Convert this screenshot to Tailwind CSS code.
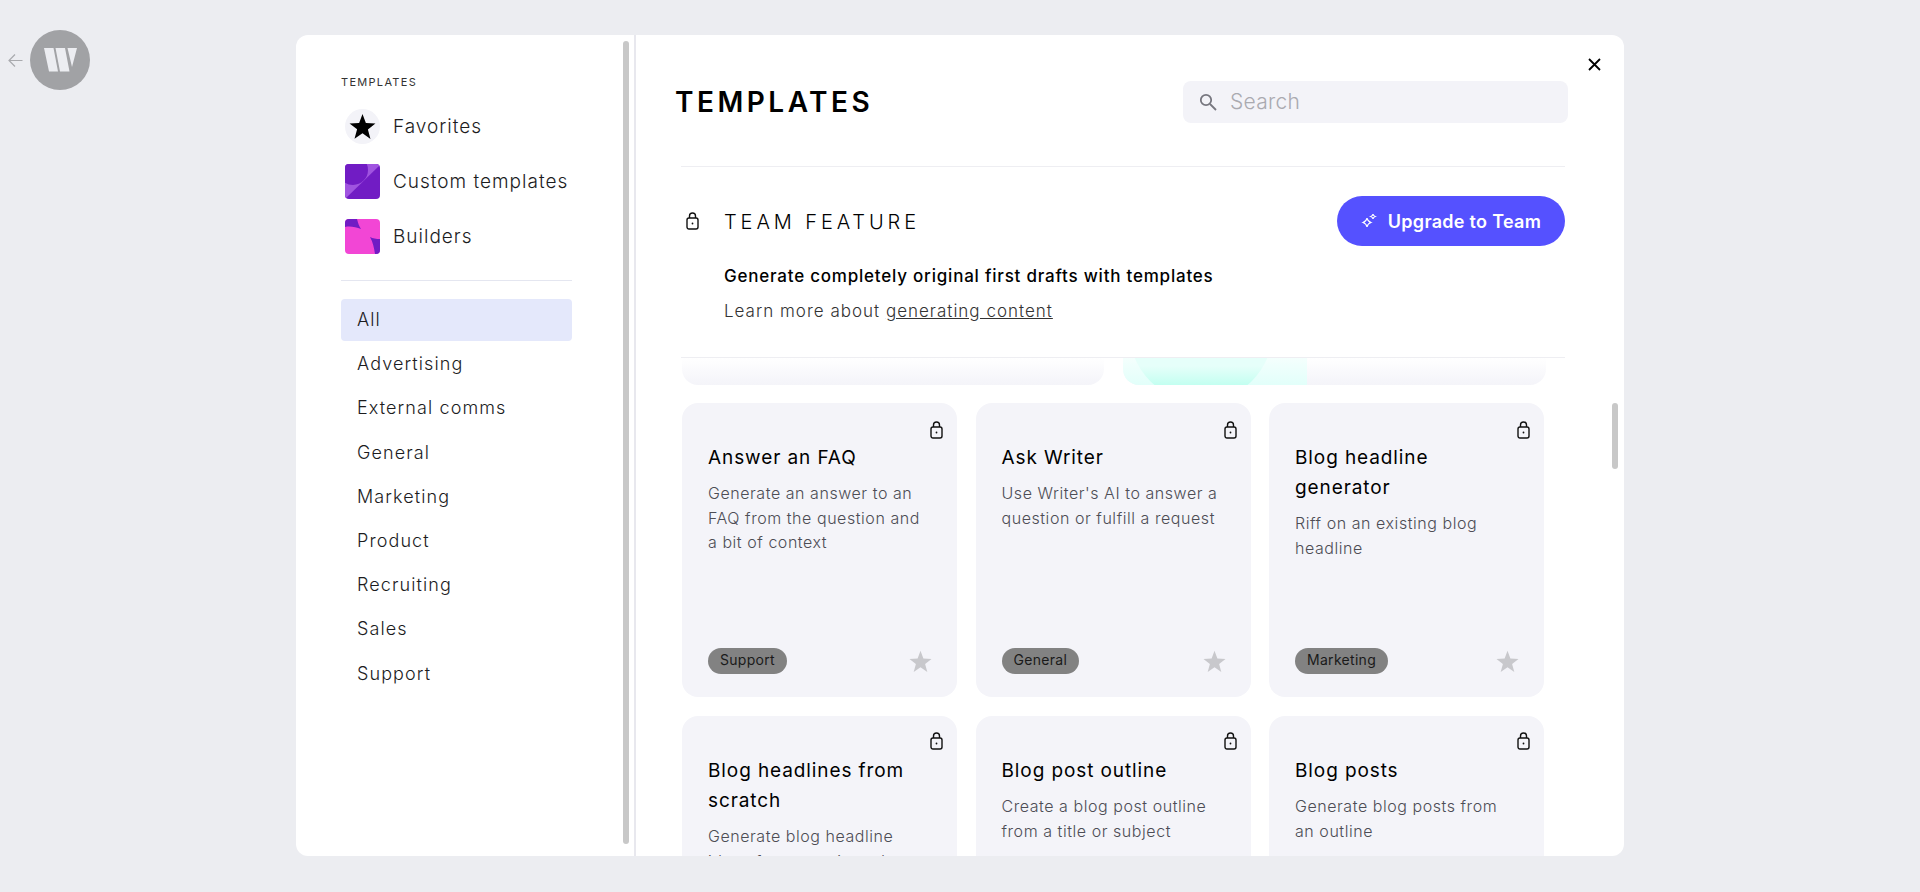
<!doctype html>
<html>
<head>
    <meta charset="UTF-8">
    <script src="https://cdn.jsdelivr.net/npm/@tailwindcss/browser@4"></script>
</head>
<body class="h-screen overflow-hidden bg-[#ecedf1] font-['Inter','Noto_Sans',sans-serif] text-black">

<!-- back arrow + logo -->
<a class="absolute left-[8px] top-[30px] flex items-center gap-[7px]">
    <svg class="w-[15px] h-[15px]" viewBox="0 0 15 15" fill="none" stroke="#a9aaae" stroke-width="1.2"><path d="M14.5 7.5H1M7 1.5L1 7.5l6 6"/></svg>
    <span class="w-[60px] h-[60px] rounded-full bg-[#a1a2a5] flex items-center justify-center">
        <svg class="w-[33px] h-[24px]" viewBox="0 0 33 24" fill="#ecedf1"><path d="M0 0h9.500l4.500 23.500H5zM11.500 0h9.500l4.500 23.500H16zM23.500 0H33l-5 19z"/></svg>
    </span>
</a>

<div class="ml-[296px] mt-[35px] w-[1328px] h-[821px] bg-white rounded-xl overflow-hidden flex relative">

    <!-- sidebar -->
    <aside class="w-[340px] h-full shrink-0 pl-[45px] pt-[40px] relative border-r-2 border-[#e8e8ee]">
        <p class="text-[11px] leading-[14px] tracking-[1.3px] text-[#333]">TEMPLATES</p>
        <ul class="mt-[20px] pl-[4px] flex flex-col gap-[20px] text-[#1c1c1e] text-[19px] leading-[35px] tracking-[1px] font-light">
            <li class="flex items-center gap-[13px]">
                <span class="w-[35px] h-[35px] rounded-full bg-[#f3f3f8] flex items-center justify-center">
                    <svg class="w-[27px] h-[27px]" viewBox="0 0 24 24" fill="#000"><path d="M12 .8l3 8.100 8.500.4-6.700 5.300 2.300 8.400L12 18l-7.100 4.900 2.300-8.400L.5 9.300 9 8.900z"/></svg>
                </span>
                Favorites
            </li>
            <li class="flex items-center gap-[13px]">
                <svg class="w-[35px] h-[35px] rounded-[4px]" viewBox="0 0 35 35"><rect width="35" height="35" fill="#711cc4"/><path d="M0 35L35 1V0H0z" fill="#a054e0"/><circle cx="8" cy="6" r="15" fill="#711cc4"/></svg>
                Custom templates
            </li>
            <li class="flex items-center gap-[13px]">
                <svg class="w-[35px] h-[35px] rounded-[4px]" viewBox="0 0 35 35"><rect width="35" height="35" fill="#f246d5"/><path d="M0 0h12c1 4 2 7 4 10C11 8 5 7 0 8z" fill="#711cc4"/><path d="M35 20c-4 0-7-.5-10-2 3 5 4 11 5 17h5z" fill="#711cc4"/></svg>
                Builders
            </li>
        </ul>
        <div class="mt-[26px] w-[231px] h-px bg-[#e4e6f0]"></div>
        <nav class="mt-[18px] w-[231px] flex flex-col gap-[2.200px] text-[#1c1c1e] text-[18px] leading-[42px] tracking-[1.100px] font-light">
            <a class="pl-[16px] bg-[#e4e8fb] rounded-[4px]">All</a>
            <a class="pl-[16px]">Advertising</a>
            <a class="pl-[16px]">External comms</a>
            <a class="pl-[16px]">General</a>
            <a class="pl-[16px]">Marketing</a>
            <a class="pl-[16px]">Product</a>
            <a class="pl-[16px]">Recruiting</a>
            <a class="pl-[16px]">Sales</a>
            <a class="pl-[16px]">Support</a>
        </nav>
        <!-- scrollbar thumb -->
        <div class="absolute right-[5px] top-[6px] bottom-[12px] w-[6px] rounded-full bg-[#c8c8c8]"></div>
    </aside>

    <!-- main column -->
    <main class="flex-1 min-w-0 pl-[39px] overflow-hidden">
        <header class="flex items-center justify-between pt-[46px] pr-[56px]">
            <h1 class="text-[28px] leading-[42px] font-semibold tracking-[3.500px]">TEMPLATES</h1>
            <label class="w-[385px] h-[42px] bg-[#f3f3f8] rounded-lg flex items-center pl-[15px] gap-[12px]">
                <svg class="w-[20px] h-[20px]" viewBox="0 0 20 20" fill="none" stroke="#77777f" stroke-width="1.800"><circle cx="8" cy="8" r="5.200"/><path d="M12 12l6 6"/></svg>
                <span class="text-[21px] leading-[30px] tracking-[0.3px] text-[#aaaab0] font-light">Search</span>
            </label>
        </header>

        <section class="mt-[43px] ml-[6px] mr-[59px] border-y border-[#eeeef2] h-[192px] relative">
            <div class="flex items-center justify-between mt-[29px]">
                <div class="flex items-center">
                    <svg class="ml-[5px] w-[13px] h-[18px]" viewBox="0 0 13 18" fill="none" stroke="#111" stroke-width="1.400"><rect x="1" y="6" width="11" height="11" rx="2"/><path d="M3.500 6V4a3 3 0 0 1 6 0v2"/><circle cx="6.500" cy="11.500" r=".9" fill="#111" stroke="none"/></svg>
                    <span class="ml-[25px] mt-[1px] text-[20px] font-light tracking-[3.900px]">TEAM FEATURE</span>
                </div>
                <button class="h-[50px] w-[228px] rounded-full bg-[#5551ff] text-white text-[18px] tracking-[0.3px] font-semibold flex items-center justify-center gap-[11px]">
                    <svg class="w-[16px] h-[16px]" viewBox="0 0 16 16" fill="none" stroke="#fff" stroke-width="1.200"><path d="M6 5c.4 2.500 1.300 3.500 4 4.500-2.700 1-3.600 2-4 4.500-.4-2.500-1.300-3.500-4-4.500 2.700-1 3.600-2 4-4.500z"/><path d="M12 1c.2 1.400.7 2 2.200 2.500C12.700 4 12.200 4.600 12 6c-.2-1.400-.7-2-2.200-2.500C11.300 3 11.800 2.400 12 1z"/></svg>
                    Upgrade to Team
                </button>
            </div>
            <p class="ml-[43px] mt-[18px] text-[17px] leading-[24px] tracking-[0.78px] font-medium">Generate completely original first drafts with templates</p>
            <p class="ml-[43px] mt-[11px] text-[17px] leading-[24px] tracking-[1px] font-light text-[#333]">Learn more about <a class="underline">generating content</a></p>
        </section>

        <!-- previous row, scrolled almost out of view -->
        <div class="ml-[7px] mr-[80px] grid grid-cols-[422px_423px] gap-[19px]">
            <div class="h-[27px] rounded-b-2xl bg-gradient-to-b from-white to-[#f4f4f9]"></div>
            <div class="h-[27px] rounded-b-2xl bg-gradient-to-b from-white to-[#f4f4f9] overflow-hidden relative">
                <div class="absolute left-0 top-0 w-[184px] h-full bg-gradient-to-b from-[#f4fffd] to-[#e2fffa]"></div>
                <div class="absolute left-[6px] top-[-100px] w-[144px] h-[144px] rounded-full bg-gradient-to-b from-[#e6fffa] from-75% to-[#b8ffee] to-92%"></div>
            </div>
        </div>

        <!-- template cards -->
        <div class="ml-[7px] mt-[18px] grid grid-cols-[275px_275px_275px] gap-x-[18.500px] gap-y-[19px]">
            <article class="h-[294px] rounded-2xl bg-[#f4f4f9] pl-[26px] pr-[30px] pt-[40px] relative flex flex-col">
                <svg class="absolute right-[14px] top-[18px] w-[13px] h-[18px]" viewBox="0 0 13 18" fill="none" stroke="#111" stroke-width="1.400"><rect x="1" y="6" width="11" height="11" rx="2"/><path d="M3.500 6V4a3 3 0 0 1 6 0v2"/><circle cx="6.500" cy="11.500" r=".9" fill="#111" stroke="none"/></svg>
                <h3 class="text-[19px] leading-[30px] tracking-[0.9px] font-normal">Answer an FAQ</h3>
                <p class="mt-[8px] text-[16px] leading-[24.500px] tracking-[0.55px] font-light text-[#4d4d55]">Generate an answer to an FAQ from the question and a bit of context</p>
                <div class="mt-auto mb-[23px] -mr-[10px] flex items-center justify-between pr-[5px]">
                    <span class="h-[26px] px-[12px] rounded-full bg-[#828282] text-[14px] tracking-[0.3px] leading-[24px] text-[#1a1a1a]">Support</span>
                    <svg class="w-[23px] h-[23px]" viewBox="0 0 24 24" fill="#c8c8cc"><path d="M12 .8l3 8.100 8.500.4-6.700 5.300 2.300 8.400L12 18l-7.100 4.900 2.300-8.400L.5 9.300 9 8.900z"/></svg>
                </div>
            </article>
            <article class="h-[294px] rounded-2xl bg-[#f4f4f9] pl-[26px] pr-[30px] pt-[40px] relative flex flex-col">
                <svg class="absolute right-[14px] top-[18px] w-[13px] h-[18px]" viewBox="0 0 13 18" fill="none" stroke="#111" stroke-width="1.400"><rect x="1" y="6" width="11" height="11" rx="2"/><path d="M3.500 6V4a3 3 0 0 1 6 0v2"/><circle cx="6.500" cy="11.500" r=".9" fill="#111" stroke="none"/></svg>
                <h3 class="text-[19px] leading-[30px] tracking-[0.9px] font-normal">Ask Writer</h3>
                <p class="mt-[8px] text-[16px] leading-[24.500px] tracking-[0.55px] font-light text-[#4d4d55]">Use Writer's AI to answer a question or fulfill a request</p>
                <div class="mt-auto mb-[23px] -mr-[10px] flex items-center justify-between pr-[5px]">
                    <span class="h-[26px] px-[12px] rounded-full bg-[#828282] text-[14px] tracking-[0.3px] leading-[24px] text-[#1a1a1a]">General</span>
                    <svg class="w-[23px] h-[23px]" viewBox="0 0 24 24" fill="#c8c8cc"><path d="M12 .8l3 8.100 8.500.4-6.700 5.300 2.300 8.400L12 18l-7.100 4.900 2.300-8.400L.5 9.300 9 8.900z"/></svg>
                </div>
            </article>
            <article class="h-[294px] rounded-2xl bg-[#f4f4f9] pl-[26px] pr-[30px] pt-[40px] relative flex flex-col">
                <svg class="absolute right-[14px] top-[18px] w-[13px] h-[18px]" viewBox="0 0 13 18" fill="none" stroke="#111" stroke-width="1.400"><rect x="1" y="6" width="11" height="11" rx="2"/><path d="M3.500 6V4a3 3 0 0 1 6 0v2"/><circle cx="6.500" cy="11.500" r=".9" fill="#111" stroke="none"/></svg>
                <h3 class="text-[19px] leading-[30px] tracking-[0.9px] font-normal">Blog headline generator</h3>
                <p class="mt-[8px] text-[16px] leading-[24.500px] tracking-[0.55px] font-light text-[#4d4d55]">Riff on an existing blog headline</p>
                <div class="mt-auto mb-[23px] -mr-[10px] flex items-center justify-between pr-[5px]">
                    <span class="h-[26px] px-[12px] rounded-full bg-[#828282] text-[14px] tracking-[0.3px] leading-[24px] text-[#1a1a1a]">Marketing</span>
                    <svg class="w-[23px] h-[23px]" viewBox="0 0 24 24" fill="#c8c8cc"><path d="M12 .8l3 8.100 8.500.4-6.700 5.300 2.300 8.400L12 18l-7.100 4.900 2.300-8.400L.5 9.300 9 8.900z"/></svg>
                </div>
            </article>
            <article class="h-[294px] rounded-2xl bg-[#f4f4f9] pl-[26px] pr-[30px] pt-[40px] relative flex flex-col">
                <svg class="absolute right-[14px] top-[16px] w-[13px] h-[18px]" viewBox="0 0 13 18" fill="none" stroke="#111" stroke-width="1.400"><rect x="1" y="6" width="11" height="11" rx="2"/><path d="M3.500 6V4a3 3 0 0 1 6 0v2"/><circle cx="6.500" cy="11.500" r=".9" fill="#111" stroke="none"/></svg>
                <h3 class="text-[19px] leading-[30px] tracking-[0.9px] font-normal">Blog headlines from scratch</h3>
                <p class="mt-[8px] text-[16px] leading-[24.500px] tracking-[0.55px] font-light text-[#4d4d55]">Generate blog headline ideas from a topic and audience</p>
            </article>
            <article class="h-[294px] rounded-2xl bg-[#f4f4f9] pl-[26px] pr-[30px] pt-[40px] relative flex flex-col">
                <svg class="absolute right-[14px] top-[16px] w-[13px] h-[18px]" viewBox="0 0 13 18" fill="none" stroke="#111" stroke-width="1.400"><rect x="1" y="6" width="11" height="11" rx="2"/><path d="M3.500 6V4a3 3 0 0 1 6 0v2"/><circle cx="6.500" cy="11.500" r=".9" fill="#111" stroke="none"/></svg>
                <h3 class="text-[19px] leading-[30px] tracking-[0.9px] font-normal">Blog post outline</h3>
                <p class="mt-[8px] text-[16px] leading-[24.500px] tracking-[0.55px] font-light text-[#4d4d55]">Create a blog post outline from a title or subject</p>
            </article>
            <article class="h-[294px] rounded-2xl bg-[#f4f4f9] pl-[26px] pr-[30px] pt-[40px] relative flex flex-col">
                <svg class="absolute right-[14px] top-[16px] w-[13px] h-[18px]" viewBox="0 0 13 18" fill="none" stroke="#111" stroke-width="1.400"><rect x="1" y="6" width="11" height="11" rx="2"/><path d="M3.500 6V4a3 3 0 0 1 6 0v2"/><circle cx="6.500" cy="11.500" r=".9" fill="#111" stroke="none"/></svg>
                <h3 class="text-[19px] leading-[30px] tracking-[0.9px] font-normal">Blog posts</h3>
                <p class="mt-[8px] text-[16px] leading-[24.500px] tracking-[0.55px] font-light text-[#4d4d55]">Generate blog posts from an outline</p>
            </article>
        </div>
    </main>

    <!-- main scrollbar thumb -->
    <div class="absolute right-[6px] top-[368px] w-[6px] h-[66px] rounded-full bg-[#c8c8c8]"></div>

    <!-- close -->
    <button class="absolute right-[23px] top-[23px]">
        <svg class="w-[13px] h-[13px]" viewBox="0 0 13 13" stroke="#000" stroke-width="1.800"><path d="M1 1l11 11M12 1L1 12"/></svg>
    </button>
</div>
</body>
</html>
